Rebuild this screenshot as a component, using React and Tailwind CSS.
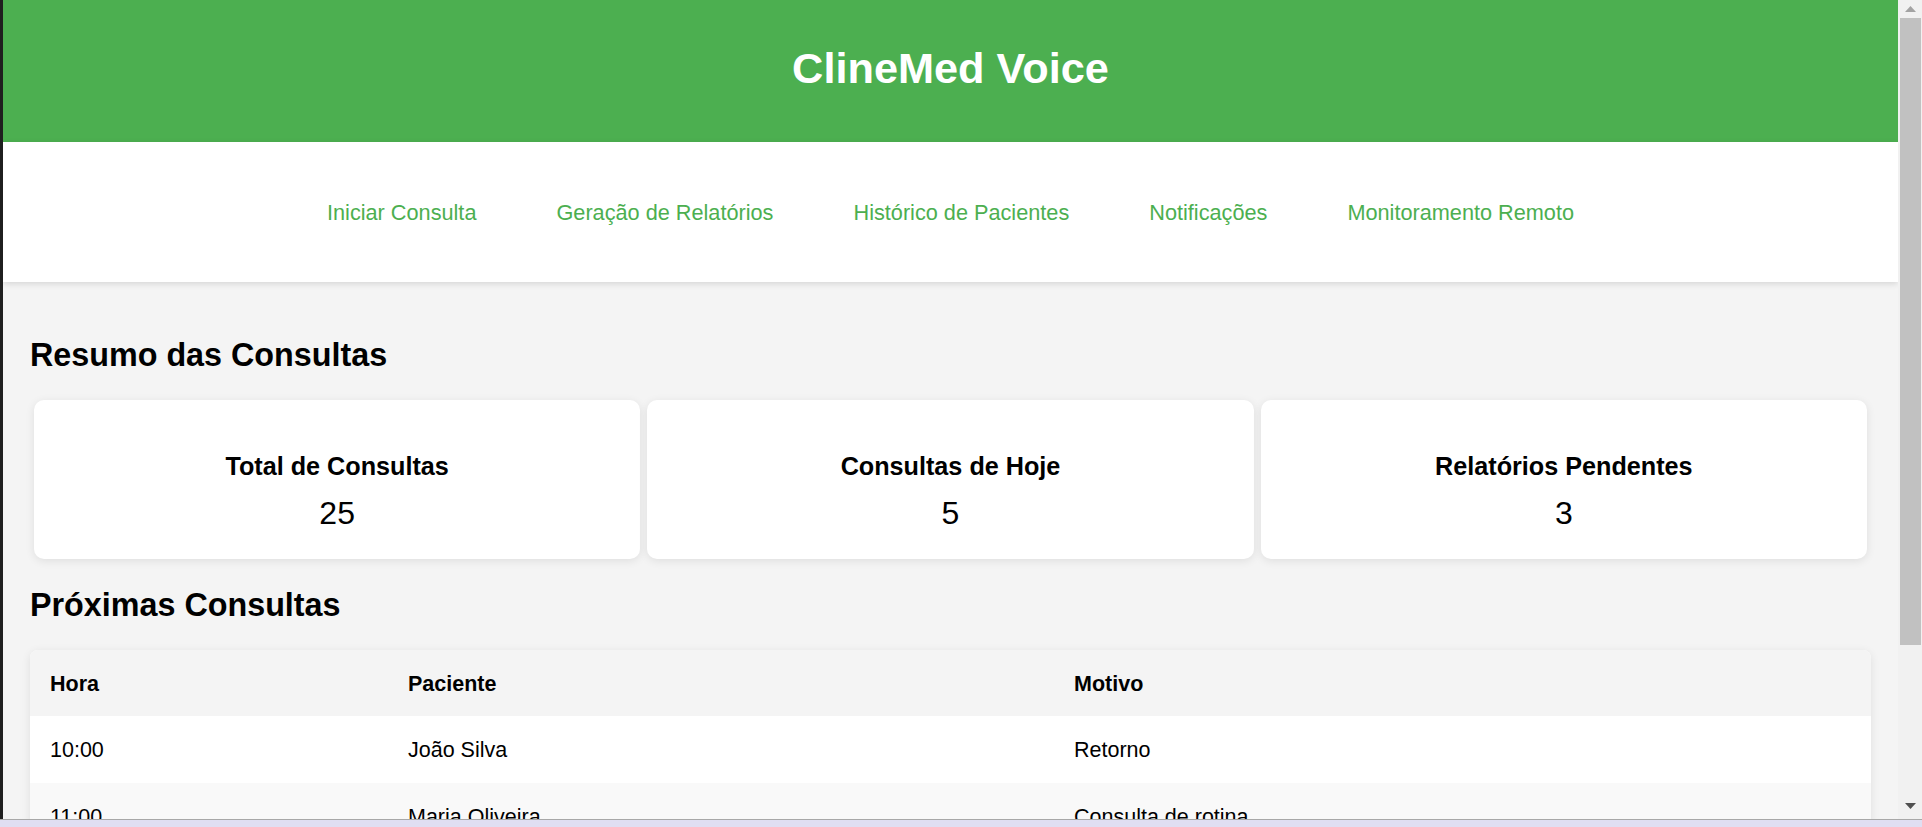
import React from 'react';

export default function App() {
    const links = ['Iniciar Consulta', 'Geração de Relatórios', 'Histórico de Pacientes', 'Notificações', 'Monitoramento Remoto'];

    const resumo = [
        { titulo: 'Total de Consultas', valor: 25 },
        { titulo: 'Consultas de Hoje', valor: 5 },
        { titulo: 'Relatórios Pendentes', valor: 3 },
    ];

    const consultas = [
        { hora: '10:00', paciente: 'João Silva', motivo: 'Retorno' },
        { hora: '11:00', paciente: 'Maria Oliveira', motivo: 'Consulta de rotina' },
    ];

    return (
        <div className="h-screen flex flex-col overflow-hidden bg-[#f4f4f4] text-black font-['Liberation_Sans',Arial,sans-serif]">
            <div className="flex flex-1 min-h-0">
                {/* borda escura da janela */}
                <div className="w-[3px] shrink-0 bg-[#1f1f1f]" />

                <div className="flex-1 min-w-0 overflow-hidden">
                    {/* CABEÇALHO */}
                    <header className="h-[142px] bg-[#4caf50] pt-[44px] text-center">
                        <h1 className="text-[43.3px] leading-[49px] font-bold text-white">ClineMed Voice</h1>
                    </header>

                    {/* MENU */}
                    <nav className="relative z-10 h-[140px] pt-[2px] bg-white shadow-[0_2px_6px_rgba(0,0,0,0.12)] flex items-center justify-center gap-[80px]">
                        {links.map((link) => (
                            <a key={link} href="#" className="text-[21.7px] leading-[24px] text-[#4caf50]">
                                {link}
                            </a>
                        ))}
                    </nav>

                    <main className="px-[27px] pt-[55px]">
                        {/* RESUMO */}
                        <h2 className="text-[32.3px] leading-[37px] font-bold">Resumo das Consultas</h2>
                        <div className="mt-[26px] flex gap-[7px] px-[4px]">
                            {resumo.map((item) => (
                                <div key={item.titulo} className="flex-1 h-[159px] bg-white rounded-[10px] shadow-[0_2px_10px_rgba(0,0,0,0.09)] pt-[52px] text-center">
                                    <h3 className="text-[25.2px] leading-[29px] font-bold">{item.titulo}</h3>
                                    <p className="mt-[14px] text-[32px] leading-[37px]">{item.valor}</p>
                                </div>
                            ))}
                        </div>

                        {/* PRÓXIMAS CONSULTAS */}
                        <h2 className="mt-[28px] text-[32.3px] leading-[37px] font-bold">Próximas Consultas</h2>
                        <div className="mt-[26px] bg-white rounded-[8px] overflow-hidden shadow-[0_2px_10px_rgba(0,0,0,0.09)]">
                            <table className="w-full border-collapse text-left text-[21.5px] leading-[24px]">
                                <thead>
                                    <tr className="bg-[#f4f4f4]">
                                        <th className="w-[358px] px-[20px] pt-[22px] pb-[20px] font-bold">Hora</th>
                                        <th className="w-[666px] px-[20px] pt-[22px] pb-[20px] font-bold">Paciente</th>
                                        <th className="px-[20px] pt-[22px] pb-[20px] font-bold">Motivo</th>
                                    </tr>
                                </thead>
                                <tbody>
                                    {consultas.map((c, i) => (
                                        <tr key={c.hora} className={i % 2 === 0 ? 'bg-white' : 'bg-[#f9f9f9]'}>
                                            <td className="px-[20px] pt-[22px] pb-[21px]">{c.hora}</td>
                                            <td className="px-[20px] pt-[22px] pb-[21px]">{c.paciente}</td>
                                            <td className="px-[20px] pt-[22px] pb-[21px]">{c.motivo}</td>
                                        </tr>
                                    ))}
                                </tbody>
                            </table>
                        </div>
                    </main>
                </div>

                {/* barra de rolagem */}
                <div className="w-[24px] shrink-0 bg-[#f1f1f1] flex flex-col">
                    <div className="h-[18px] flex items-center justify-center">
                        <svg width="11" height="6" viewBox="0 0 11 6">
                            <polygon points="5.5,0 11,6 0,6" fill="#a3a3a3" />
                        </svg>
                    </div>
                    <div className="h-[627px] ml-[2px] mr-px bg-[#c1c1c1]" />
                    <div className="flex-1" />
                    <div className="h-[18px] mb-[4px] flex items-center justify-center">
                        <svg width="11" height="6" viewBox="0 0 11 6">
                            <polygon points="0,0 11,0 5.5,6" fill="#505050" />
                        </svg>
                    </div>
                </div>
            </div>

            {/* barra inferior */}
            <div className="h-[8px] shrink-0 border-t border-[#a8a8a8] bg-[#e0def2]" />
        </div>
    );
}
